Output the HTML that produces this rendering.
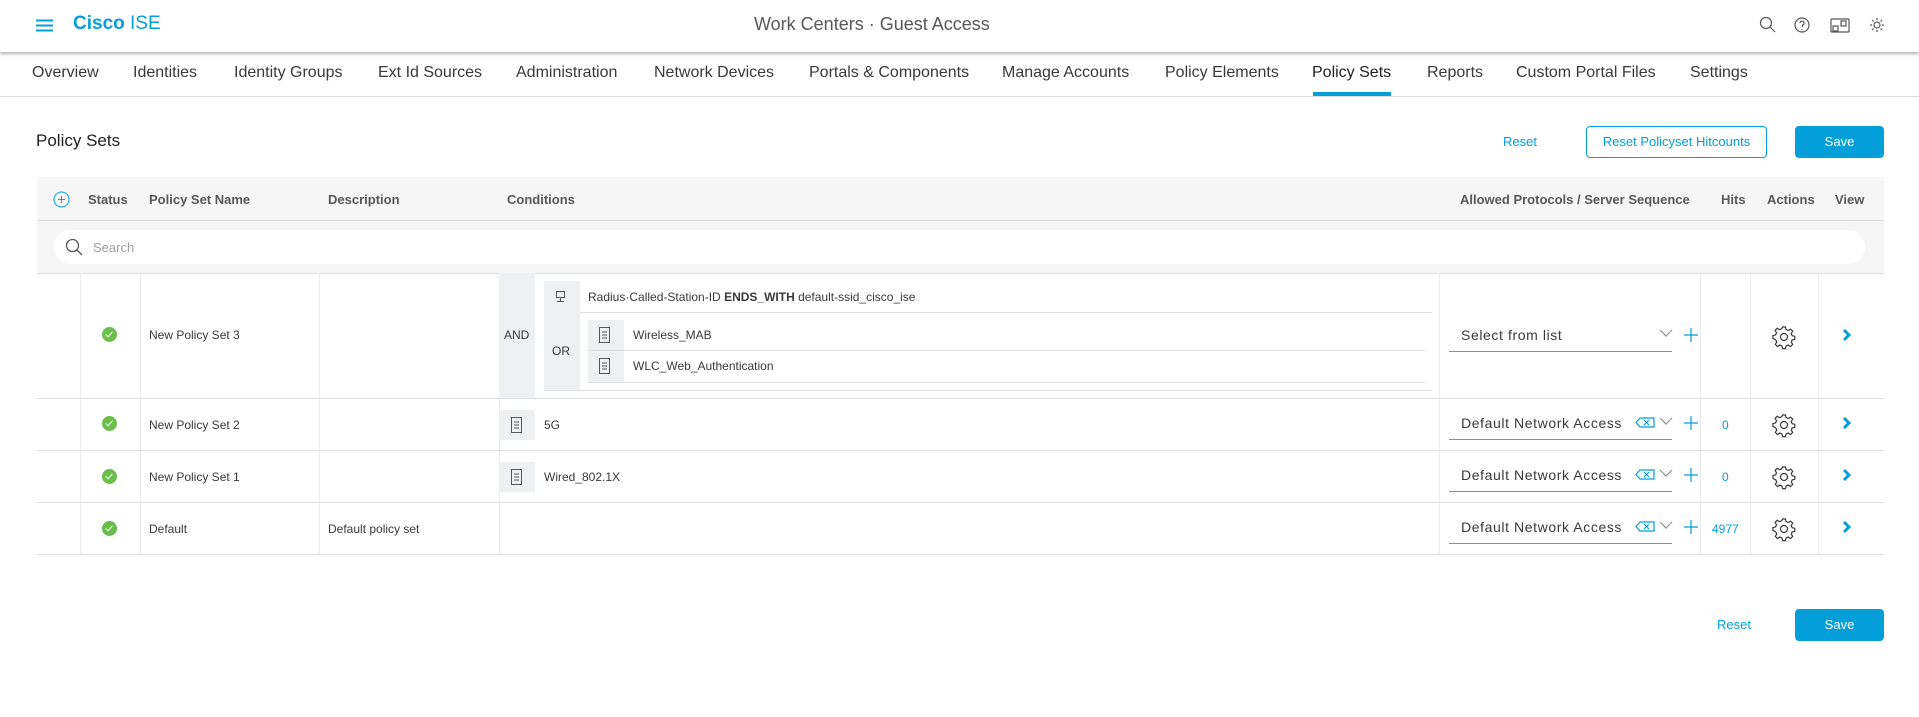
<!DOCTYPE html>
<html><head><meta charset="utf-8"><style>
*{box-sizing:border-box;margin:0;padding:0}
body{width:1919px;height:717px;background:#fff;font-family:"Liberation Sans",sans-serif;color:#39393b;position:relative;overflow:hidden}
.a{position:absolute;white-space:nowrap}
.hdr{position:absolute;left:0;top:0;width:1919px;height:52px;background:#fff;box-shadow:0 2px 3px rgba(0,0,0,.3)}
.nav{font-size:16px;color:#39393b;top:64px}
.th{font-size:13px;font-weight:bold;color:#58585b;top:192px}
.cell{font-size:12px;color:#39393b}
.vl{position:absolute;width:1px;background:#eaeaea}
.hl{position:absolute;height:1px;background:#ddd}
.chk{position:absolute;width:15px;height:15px;border-radius:50%;background:#6abf4b}
.chk:after{content:"";position:absolute;left:5px;top:3px;width:3px;height:6px;border:solid #fff;border-width:0 1.5px 1.5px 0;transform:rotate(40deg)}
.ib{position:absolute;background:#eff0f2}
.dd{position:absolute;left:1449px;width:223px;border-bottom:1.5px solid #8f8f8f;font-size:14px;letter-spacing:.6px;color:#39393b;padding-left:12px}
.blue{color:#049fd9}
</style></head><body>
<div class="hdr"></div>
<svg class="a" style="left:36px;top:19px" width="17" height="13"><path d="M0 1.5h17M0 6.5h17M0 11.5h17" stroke="#049fd9" stroke-width="2"/></svg>
<div class="a" style="left:73px;top:13px;font-size:19px;color:#049fd9"><b>Cisco</b> ISE</div>
<div class="a" style="left:754px;top:14px;font-size:18px;color:#58585b">Work Centers · Guest Access</div>
<svg class="a" style="left:1759px;top:16px" width="130" height="18" fill="none" stroke="#58585b" stroke-width="1.2">
<circle cx="7" cy="7" r="5.5"/><path d="M11 11l5 5"/>
<circle cx="43" cy="9" r="7"/><path d="M41 7a2 2 0 1 1 2.5 2v2M43 13v1"/>
<rect x="72" y="3" width="18" height="13" rx="1"/><rect x="74" y="10" width="5" height="5"/><rect x="82" y="5" width="5" height="5"/>
<circle cx="118" cy="9" r="3"/><path d="M118 2v2M118 14v2M111 9h2M123 9h2M113 4l1.5 1.5M121.5 12.5L123 14M113 14l1.5-1.5M121.5 5.5L123 4"/>
</svg>
<div class="a nav" style="left:32px">Overview</div>
<div class="a nav" style="left:133px">Identities</div>
<div class="a nav" style="left:234px">Identity Groups</div>
<div class="a nav" style="left:378px">Ext Id Sources</div>
<div class="a nav" style="left:516px">Administration</div>
<div class="a nav" style="left:654px">Network Devices</div>
<div class="a nav" style="left:809px">Portals &amp; Components</div>
<div class="a nav" style="left:1002px">Manage Accounts</div>
<div class="a nav" style="left:1165px">Policy Elements</div>
<div class="a nav" style="left:1312px;color:#222">Policy Sets</div>
<div class="a nav" style="left:1427px">Reports</div>
<div class="a nav" style="left:1516px">Custom Portal Files</div>
<div class="a nav" style="left:1690px">Settings</div>
<div class="a" style="left:1313px;top:92px;width:78px;height:4px;background:#049fd9"></div>
<div class="hl" style="left:0;top:96px;width:1919px;background:#dfdfdf"></div>

<div class="a" style="left:36px;top:131px;font-size:17px;color:#222">Policy Sets</div>
<div class="a blue" style="left:1503px;top:134px;font-size:13px">Reset</div>
<div class="a blue" style="left:1586px;top:126px;width:181px;height:32px;border:1px solid #049fd9;border-radius:4px;font-size:13px;text-align:center;line-height:30px">Reset Policyset Hitcounts</div>
<div class="a" style="left:1795px;top:126px;width:89px;height:32px;background:#049fd9;border-radius:4px;color:#fff;font-size:13px;text-align:center;line-height:32px">Save</div>

<div class="a" style="left:37px;top:177px;width:1847px;height:96px;background:#f6f6f6"></div>
<div class="hl" style="left:37px;top:220px;width:1847px"></div>
<svg class="a" style="left:53px;top:191px" width="17" height="17" fill="none" stroke="#049fd9"><circle cx="8.5" cy="8.5" r="7.5"/><path d="M8.5 5v7M5 8.5h7"/></svg>
<div class="a th" style="left:88px">Status</div>
<div class="a th" style="left:149px">Policy Set Name</div>
<div class="a th" style="left:328px">Description</div>
<div class="a th" style="left:507px">Conditions</div>
<div class="a th" style="left:1460px">Allowed Protocols / Server Sequence</div>
<div class="a th" style="left:1721px">Hits</div>
<div class="a th" style="left:1767px">Actions</div>
<div class="a th" style="left:1835px">View</div>
<div class="a" style="left:54px;top:230px;width:1811px;height:34px;background:#fff;border-radius:17px"></div>
<svg class="a" style="left:65px;top:238px" width="18" height="18" fill="none" stroke="#58585b" stroke-width="1.3"><circle cx="7.5" cy="7.5" r="6"/><path d="M12 12l5 5"/></svg>
<div class="a" style="left:93px;top:240px;font-size:13px;color:#9e9ea2">Search</div>

<div class="hl" style="left:37px;top:273px;width:1847px"></div>
<div class="hl" style="left:37px;top:398px;width:1847px"></div>
<div class="hl" style="left:37px;top:450px;width:1847px"></div>
<div class="hl" style="left:37px;top:502px;width:1847px"></div>
<div class="hl" style="left:37px;top:554px;width:1847px"></div>
<div class="vl" style="left:80px;top:273px;height:281px"></div>
<div class="vl" style="left:140px;top:273px;height:281px"></div>
<div class="vl" style="left:319px;top:273px;height:281px"></div>
<div class="vl" style="left:499px;top:273px;height:281px"></div>
<div class="vl" style="left:1439px;top:273px;height:281px"></div>
<div class="vl" style="left:1700px;top:273px;height:281px"></div>
<div class="vl" style="left:1750px;top:273px;height:281px"></div>
<div class="vl" style="left:1818px;top:273px;height:281px"></div>

<div class="chk" style="left:102px;top:327px"></div>
<div class="chk" style="left:102px;top:416px"></div>
<div class="chk" style="left:102px;top:469px"></div>
<div class="chk" style="left:102px;top:521px"></div>
<div class="a cell" style="left:149px;top:328px">New Policy Set 3</div>
<div class="a cell" style="left:149px;top:418px">New Policy Set 2</div>
<div class="a cell" style="left:149px;top:470px">New Policy Set 1</div>
<div class="a cell" style="left:149px;top:522px">Default</div>
<div class="a cell" style="left:328px;top:522px">Default policy set</div>

<div class="ib" style="left:499px;top:273px;width:36px;height:125px"></div>
<div class="a cell" style="left:504px;top:328px">AND</div>
<div class="ib" style="left:544px;top:281px;width:36px;height:31px"></div>
<svg class="a" style="left:555px;top:290px" width="12" height="12" fill="none" stroke="#58585b"><rect x="1.5" y="1.5" width="8" height="6"/><path d="M5.5 7.5v4M2 11.5h7"/></svg>
<div class="a cell" style="left:588px;top:290px">Radius·Called-Station-ID <b>ENDS_WITH</b> default-ssid_cisco_ise</div>
<div class="hl" style="left:544px;top:312px;width:888px"></div>
<div class="ib" style="left:544px;top:312px;width:36px;height:78px"></div>
<div class="a cell" style="left:552px;top:344px">OR</div>
<div class="ib" style="left:588px;top:320px;width:36px;height:62px"></div>
<svg class="a" style="left:598px;top:326px" width="14" height="18" fill="none" stroke="#58585b"><rect x="1.5" y="1.5" width="10" height="15"/><path d="M4 6h5M4 9h5M4 12h5"/></svg>
<svg class="a" style="left:598px;top:357px" width="14" height="18" fill="none" stroke="#58585b"><rect x="1.5" y="1.5" width="10" height="15"/><path d="M4 6h5M4 9h5M4 12h5"/></svg>
<div class="a cell" style="left:633px;top:328px">Wireless_MAB</div>
<div class="a cell" style="left:633px;top:359px">WLC_Web_Authentication</div>
<div class="hl" style="left:588px;top:350px;width:837px"></div>
<div class="hl" style="left:588px;top:382px;width:837px"></div>
<div class="hl" style="left:544px;top:390px;width:888px"></div>

<div class="ib" style="left:499px;top:410px;width:36px;height:30px"></div>
<svg class="a" style="left:510px;top:416px" width="14" height="18" fill="none" stroke="#58585b"><rect x="1.5" y="1.5" width="10" height="15"/><path d="M4 6h5M4 9h5M4 12h5"/></svg>
<div class="a cell" style="left:544px;top:418px">5G</div>
<div class="ib" style="left:499px;top:462px;width:36px;height:30px"></div>
<svg class="a" style="left:510px;top:468px" width="14" height="18" fill="none" stroke="#58585b"><rect x="1.5" y="1.5" width="10" height="15"/><path d="M4 6h5M4 9h5M4 12h5"/></svg>
<div class="a cell" style="left:544px;top:470px">Wired_802.1X</div>

<div class="dd" style="top:327px;height:25px">Select from list</div>
<div class="dd" style="top:415px;height:25px">Default Network Access</div>
<div class="dd" style="top:467px;height:25px">Default Network Access</div>
<div class="dd" style="top:519px;height:25px">Default Network Access</div>
<svg class="a" style="left:1630px;top:325px" width="70" height="220" fill="none" stroke-width="1.2">
<g stroke="#8f8f8f"><path d="M30 5l6 6 6-6M30 93l6 6 6-6M30 145l6 6 6-6M30 197l6 6 6-6"/></g>
<g stroke="#049fd9"><path d="M54 10h14M61 3v14M54 98h14M61 91v14M54 150h14M61 143v14M54 202h14M61 195v14"/>
<path d="M10 93h14v9H10l-4-4.5zM14 95l5 5M19 95l-5 5M10 145h14v9H10l-4-4.5zM14 147l5 5M19 147l-5 5M10 197h14v9H10l-4-4.5zM14 199l5 5M19 199l-5 5"/></g>
</svg>
<div class="a blue" style="left:1722px;top:418px;font-size:12px">0</div>
<div class="a blue" style="left:1722px;top:470px;font-size:12px">0</div>
<div class="a blue" style="left:1712px;top:522px;font-size:12px">4977</div>
<svg class="a" style="left:1772px;top:325px" width="26" height="220" fill="none" stroke="#39393b" stroke-width="1.2">
<defs><g id="g"><circle cx="12" cy="12" r="3.5"/><path d="M10.5 2h3l.6 2.6 2.2.9 2.3-1.4 2.1 2.1-1.4 2.3.9 2.2 2.6.6v3l-2.6.6-.9 2.2 1.4 2.3-2.1 2.1-2.3-1.4-2.2.9-.6 2.6h-3l-.6-2.6-2.2-.9-2.3 1.4-2.1-2.1 1.4-2.3-.9-2.2L1 13.5v-3l2.6-.6.9-2.2-1.4-2.3 2.1-2.1 2.3 1.4 2.2-.9z"/></g></defs>
<use href="#g"/><use href="#g" y="88"/><use href="#g" y="140"/><use href="#g" y="192"/>
</svg>
<svg class="a" style="left:1841px;top:328px" width="12" height="210" fill="none" stroke="#049fd9" stroke-width="3">
<path d="M3 2l5 5-5 5M3 90l5 5-5 5M3 142l5 5-5 5M3 194l5 5-5 5"/></svg>

<div class="a blue" style="left:1717px;top:617px;font-size:13px">Reset</div>
<div class="a" style="left:1795px;top:609px;width:89px;height:32px;background:#049fd9;border-radius:4px;color:#fff;font-size:13px;text-align:center;line-height:32px">Save</div>
</body></html>
